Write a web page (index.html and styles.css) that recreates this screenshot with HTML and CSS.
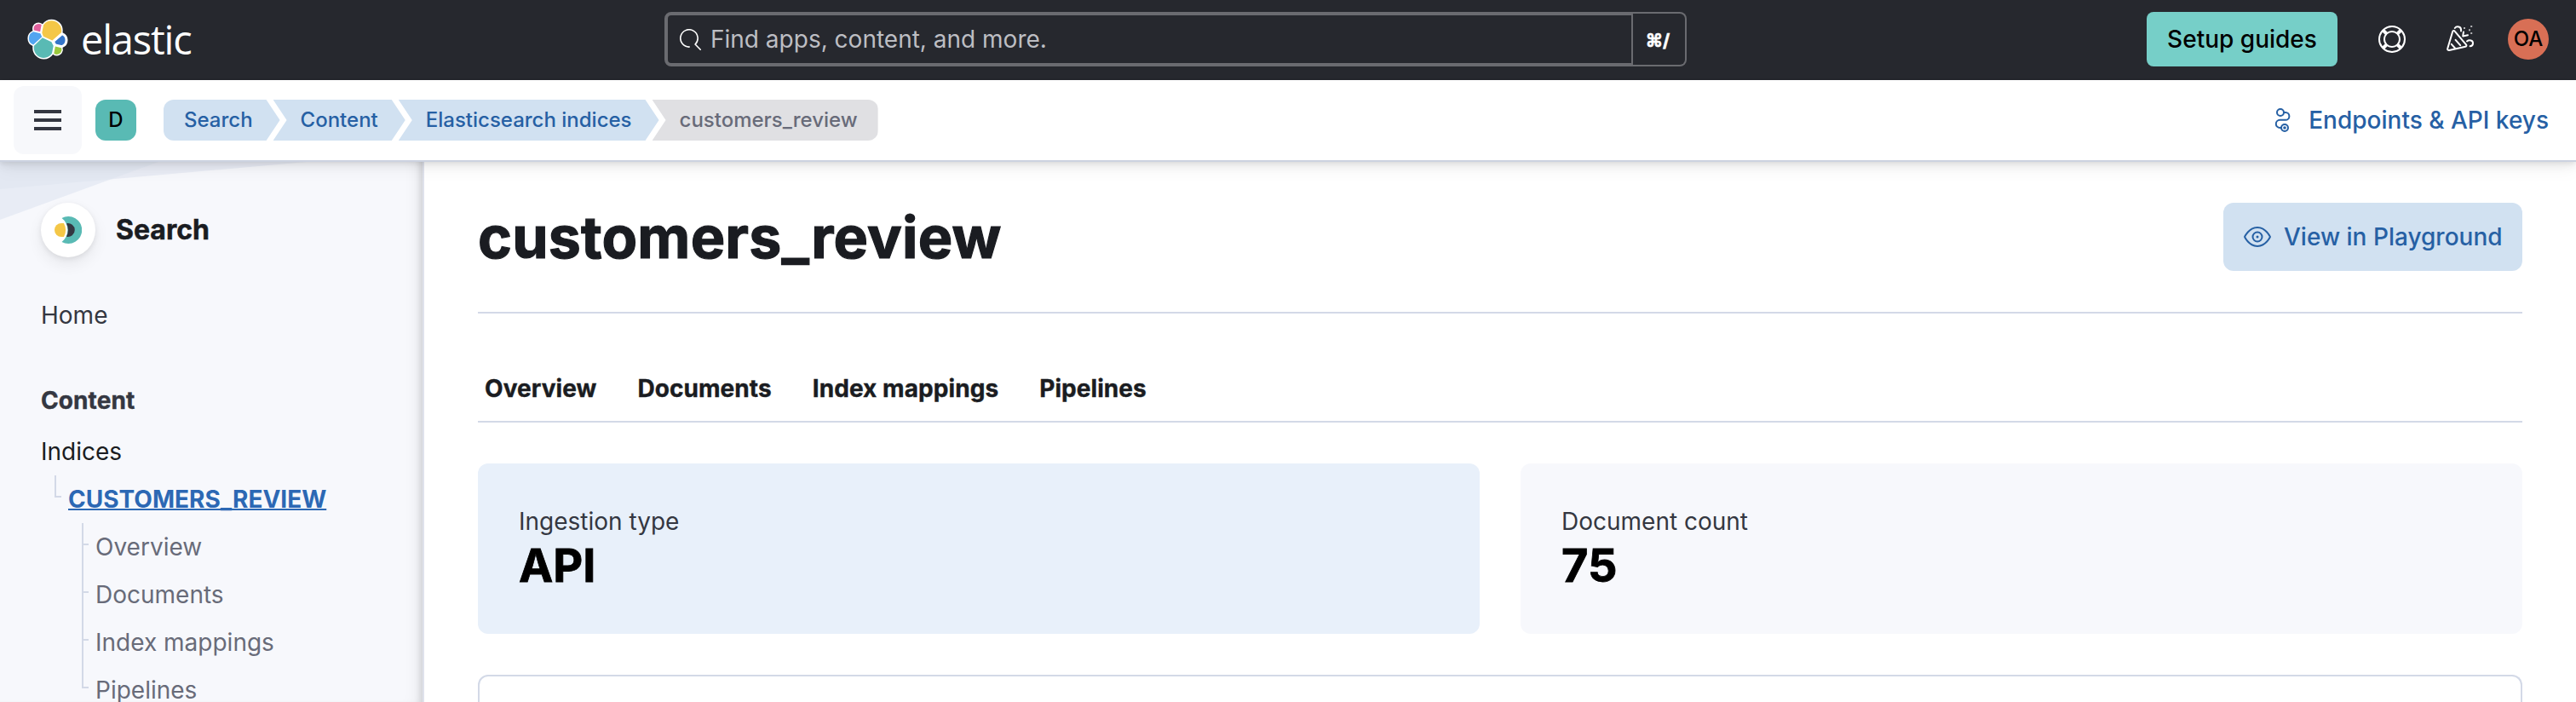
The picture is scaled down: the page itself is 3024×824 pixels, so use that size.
FILE: index.html
```html
<!DOCTYPE html>
<html lang="en">
<head>
<meta charset="utf-8">
<title>customers_review - Elastic</title>
<link rel="stylesheet" href="styles.css">
</head>
<body>
<header class="topbar">
  <div class="brand">
    <svg class="brand-mark" viewBox="0 0 32 32">
      <g stroke="#fff" stroke-width="2" stroke-linejoin="round">
        <path fill="#f4c747" d="M12.58 13.787l7.002 3.211 7.066-6.213a7.849 7.849 0 00.152-1.557c0-4.287-3.464-7.77-7.723-7.77a7.705 7.705 0 00-6.37 3.388l-1.176 6.12z"/>
        <path fill="#59bab4" d="M5.32 21.224A7.92 7.92 0 005.17 22.8c0 4.298 3.475 7.796 7.746 7.796a7.73 7.73 0 006.398-3.402l1.166-6.101-1.556-2.985-7.03-3.214z"/>
        <path fill="#e0609d" d="M5.28 9.077l4.8 1.137L11.128 4.73a3.785 3.785 0 00-2.314-.79A3.806 3.806 0 005.02 7.752c0 .452.09.898.26 1.325z"/>
        <path fill="#51a5f0" d="M4.86 10.22a5.4 5.4 0 00-3.57 5.083 5.39 5.39 0 003.46 5.031l6.73-6.118-1.234-2.648z"/>
        <path fill="#9bc83d" d="M20.87 27.19a3.75 3.75 0 002.305.799 3.802 3.802 0 003.535-5.126l-4.796-1.126z"/>
        <path fill="#3475c9" d="M21.846 20.563l5.28 1.24a5.41 5.41 0 003.57-5.084 5.39 5.39 0 00-3.454-5.021l-6.906 6.07z"/>
      </g>
      <path fill="#f4c747" d="M12.58 13.787l7.002 3.211 7.066-6.213a7.849 7.849 0 00.152-1.557c0-4.287-3.464-7.77-7.723-7.77a7.705 7.705 0 00-6.37 3.388l-1.176 6.12z"/>
      <path fill="#59bab4" d="M5.32 21.224A7.92 7.92 0 005.17 22.8c0 4.298 3.475 7.796 7.746 7.796a7.73 7.73 0 006.398-3.402l1.166-6.101-1.556-2.985-7.03-3.214z"/>
      <path fill="#e0609d" d="M5.28 9.077l4.8 1.137L11.128 4.73a3.785 3.785 0 00-2.314-.79A3.806 3.806 0 005.02 7.752c0 .452.09.898.26 1.325z"/>
      <path fill="#51a5f0" d="M4.86 10.22a5.4 5.4 0 00-3.57 5.083 5.39 5.39 0 003.46 5.031l6.73-6.118-1.234-2.648z"/>
      <path fill="#9bc83d" d="M20.87 27.19a3.75 3.75 0 002.305.799 3.802 3.802 0 003.535-5.126l-4.796-1.126z"/>
    </svg>
    <span class="brand-name">elastic</span>
  </div>
  <div class="search">
    <div class="search-input">
      <svg class="search-icon" viewBox="0 0 16 16" fill="none" stroke="#fff" stroke-linecap="round"><path d="M7.2 13.5A6.5 6.5 0 1 1 11.6 11.6L15.5 15.5"/></svg>
      <span class="search-placeholder">Find apps, content, and more.</span>
    </div>
    <div class="search-key">⌘/</div>
  </div>
  <div class="top-actions">
    <button class="setup">Setup guides</button>
    <svg class="top-icon" viewBox="0 0 16 16" fill="#fff"><path d="M13.6 12.186l-1.357-1.358c-.025-.025-.058-.034-.084-.056.53-.794.84-1.746.84-2.773a4.977 4.977 0 00-.84-2.772c.026-.02.059-.03.084-.056L13.6 3.813a6.96 6.96 0 010 8.373zM8 15a6.956 6.956 0 01-4.186-1.4l1.358-1.358c.025-.025.035-.057.055-.084C6.02 12.688 6.974 13 8 13a4.978 4.978 0 002.773-.84c.02.026.03.058.056.083l1.357 1.358A6.956 6.956 0 018 15zm-5.601-2.813a6.963 6.963 0 010-8.373l1.359 1.358c.024.025.057.035.084.055A4.97 4.97 0 003 8c0 1.027.31 1.98.842 2.773-.027.02-.06.03-.084.055l-1.36 1.358zm5.6-.187A4 4 0 118 4a4 4 0 010 8zM8 1c1.573 0 3.019.525 4.187 1.4l-1.357 1.358c-.025.025-.035.057-.056.084A4.979 4.979 0 008 3a4.979 4.979 0 00-2.773.842c-.02-.027-.03-.059-.055-.084L3.814 2.4A6.957 6.957 0 018 1zm0-1a8.001 8.001 0 10.003 16.002A8.001 8.001 0 008 0z"/></svg>
    <svg class="top-icon" viewBox="0 0 16 16" fill="none" stroke="#fff" stroke-linecap="round" stroke-linejoin="round">
      <path d="M3.6 3.5C3.8 2.9 4.5 2.9 4.8 3.3L11.5 11.2C11.9 11.7 11.7 12.3 11.1 12.4L1.6 14.5C.9 14.6.4 14.1.6 13.5Z"/>
      <path d="M2.9 10.9L5.2 13.5M5.3 8.4L8.1 11.6"/>
      <path d="M4.9 1.5C5.8.2 8.9.2 8.5 3.2"/>
      <path d="M10 3.7L9.6 6.2L12.5 5.6"/>
      <path d="M12 9.2C13.3 8.1 15.6 8.6 15.5 10.4C15.5 11.5 14.7 12.1 13.8 12.1"/>
      <path stroke="none" fill="#fff" fill-opacity=".65" d="M10 1h1v1H10zM14.1 0h1V1h-1zM13 2.1h1V3.1H13zM14.1 4h1V5h-1z"/>
    </svg>
    <span class="avatar">OA</span>
  </div>
</header>

<div class="navbar">
  <button class="menu"><span class="menu-line"></span><span class="menu-line"></span><span class="menu-line"></span></button>
  <span class="space">D</span>
  <nav class="crumbs">
    <a class="crumb crumb-first">Search</a>
    <a class="crumb">Content</a>
    <a class="crumb">Elasticsearch indices</a>
    <span class="crumb crumb-last">customers_review</span>
  </nav>
  <a class="endpoints">
    <svg class="endpoints-icon" viewBox="0 0 32 32" fill="none" stroke="#2660a4" stroke-width="2">
      <circle cx="12" cy="7" r="4"/><circle cx="17" cy="25" r="4"/><circle cx="17" cy="25" r="1.8" fill="#2660a4" stroke="none"/>
      <path d="M16 7H18A4.200 4.200 0 0 1 18 15.800H11.400A4.300 4.300 0 0 0 11.400 25H13"/>
    </svg>
    <span class="endpoints-text">Endpoints &amp; API keys</span>
  </a>
</div>

<div class="body">
  <aside class="sidebar">
    <svg class="sidebar-art" width="400" height="70" viewBox="0 0 400 70"><path fill="#e9ecf5" d="M0 0H360L0 32Z"/><path fill="#dfe5f1" fill-opacity=".62" d="M0 0H186L0 68Z"/></svg>
    <div class="solution">
      <span class="solution-badge">
        <svg class="solution-icon" viewBox="0 0 32 32">
          <path fill="#f4c747" d="M8 8A8 8 0 0 0 8 24H11A17.500 17.500 0 0 0 11 8Z"/>
          <path fill="#59bab4" d="M8.500 2A16 16 0 1 1 8.500 30A17.500 17.500 0 0 0 8.500 2Z"/>
          <path fill="#343741" d="M14 8.200A8 8 0 1 1 14 23.800A17.500 17.500 0 0 0 14 8.200Z"/>
        </svg>
      </span>
      <span class="solution-name">Search</span>
    </div>
    <nav class="nav">
      <a class="nav-item nav-home">Home</a>
      <div class="nav-item nav-heading">Content</div>
      <a class="nav-item nav-active">Indices</a>
      <div class="tree">
        <a class="nav-item tree-item tree-last"><span class="nav-current">CUSTOMERS_REVIEW</span></a>
        <div class="tree">
          <a class="nav-item tree-item">Overview</a>
          <a class="nav-item tree-item">Documents</a>
          <a class="nav-item tree-item">Index mappings</a>
          <a class="nav-item tree-item tree-last">Pipelines</a>
        </div>
      </div>
    </nav>
  </aside>
  <main class="main">
    <div class="page-header">
      <h1 class="title">customers_review</h1>
      <button class="playground">
        <svg class="playground-icon" viewBox="0 0 16 16" fill="#2660a4"><path d="M15.98 7.873c.013.03.02.064.02.098v.06a.24.24 0 01-.02.097C15.952 8.188 13.291 14 8 14S.047 8.188.02 8.128A.24.24 0 010 8.03v-.059c0-.034.007-.068.02-.098C.048 7.813 2.709 2 8 2s7.953 5.813 7.98 5.873zm-1.37-.424a12.097 12.097 0 00-1.385-1.862C11.739 3.956 9.999 3 8 3c-2 0-3.740.956-5.225 2.587a12.098 12.098 0 00-1.701 2.414 12.095 12.095 0 001.700 2.413C4.260 12.043 6.002 13 8 13s3.740-.956 5.225-2.587A12.097 12.097 0 0014.926 8c-.08-.15-.189-.343-.315-.551zM8 4.750A3.253 3.253 0 0111.250 8 3.254 3.254 0 018 11.250 3.253 3.253 0 014.750 8 3.252 3.252 0 018 4.750zm0 1C6.760 5.750 5.750 6.760 5.750 8S6.760 10.250 8 10.250 10.250 9.240 10.250 8 9.240 5.750 8 5.750zm0 1.500a.75.75 0 100 1.500.75.75 0 000-1.500z"/></svg>
        <span class="playground-text">View in Playground</span>
      </button>
    </div>
    <div class="tabs">
      <a class="tab">Overview</a><a class="tab">Documents</a><a class="tab">Index mappings</a><a class="tab">Pipelines</a>
    </div>
    <div class="stats">
      <div class="stat stat-primary"><span class="stat-label">Ingestion type</span><strong class="stat-value">API</strong></div>
      <div class="stat"><span class="stat-label">Document count</span><strong class="stat-value">75</strong></div>
    </div>
    <section class="panel"></section>
  </main>
</div>
</body>
</html>
```

FILE: styles.css
```css
* { box-sizing: border-box; }
body {
  margin: 0;
  height: 824px;
  overflow: hidden;
  display: flex;
  flex-direction: column;
  font-family: Inter, "Liberation Sans", sans-serif;
  font-size: 28px;
  color: #343741;
  background: #fff;
}
button { border: 0; margin: 0; font: inherit; }
svg { display: block; flex: none; }

.topbar {
  flex: none;
  height: 94px;
  padding: 0 32px 2px;
  background: #26282e;
  display: grid;
  grid-template-columns: 748px 1200px 1fr;
  align-items: center;
}
.brand { display: flex; align-items: center; gap: 15px; }
.brand-mark { width: 48px; height: 48px; }
.brand-name {
  font-family: "Open Sans", "Noto Sans", sans-serif;
  font-size: 47px;
  font-weight: 380;
  line-height: 64px;
  letter-spacing: -1.2px;
  color: #fff;
}
.search { display: flex; height: 64px; }
.search-input {
  flex: 1;
  display: flex;
  align-items: center;
  padding-left: 14px;
  gap: 11px;
  border: 4px solid #6a6b70;
  border-right-width: 2px;
  border-radius: 8px 0 0 8px;
}
.search-icon { width: 25px; height: 25px; }
.search-placeholder { color: #bdbec3; }
.search-key {
  width: 63px;
  border: 2px solid #6a6b70;
  border-left: 0;
  border-radius: 0 8px 8px 0;
  display: flex;
  align-items: center;
  justify-content: center;
  padding: 3px 3px 0 0;
  font-size: 21px;
  font-weight: 700;
  -webkit-text-stroke: .6px #fff;
  color: #fff;
}
.top-actions { display: flex; align-items: center; justify-content: flex-end; }
.setup {
  width: 224px;
  height: 64px;
  padding: 0;
  margin-right: 48px;
  border-radius: 8px;
  background: #76cfc8;
  color: #000;
  font-weight: 500;
}
.top-icon { width: 32px; height: 32px; margin-right: 48px; }
.top-icon + .top-icon { margin-right: 40px; }
.avatar {
  width: 48px;
  height: 48px;
  border-radius: 50%;
  background: #d86f55;
  color: #000;
  font-size: 24px;
  font-weight: 500;
  line-height: 47px;
  text-align: center;
}

.navbar {
  flex: none;
  position: relative;
  z-index: 2;
  height: 96px;
  padding: 0 32px 0 16px;
  background: #fff;
  border-bottom: 2px solid #ccd2e0;
  box-shadow: 0 2px 5px rgba(0, 0, 0, .07), 0 6px 10px rgba(0, 0, 0, .05), 0 10px 20px rgba(0, 0, 0, .04);
  display: flex;
  align-items: center;
}
.menu {
  width: 80px;
  height: 80px;
  padding: 0;
  border-radius: 12px;
  background: #f7f8fb;
  display: flex;
  flex-direction: column;
  align-items: center;
  justify-content: center;
  gap: 6px;
}
.menu-line { width: 32px; height: 4px; background: #343741; }
.space {
  width: 48px;
  height: 48px;
  margin: 0 32px 0 16px;
  border-radius: 12px;
  background: #59bab4;
  color: #000;
  font-size: 24px;
  font-weight: 500;
  line-height: 48px;
  text-align: center;
}
.crumbs { display: flex; flex: 1; }
.crumb {
  height: 48px;
  line-height: 47px;
  padding: 0 32px;
  margin-left: -8px;
  background: #d1e1f1;
  color: #2660a4;
  font-size: 24px;
  font-weight: 500;
  clip-path: polygon(0 0, calc(100% - 16px) 0, 100% 50%, calc(100% - 16px) 100%, 0 100%, 16px 50%);
}
.crumb-first {
  margin-left: 0;
  padding-left: 24px;
  border-radius: 12px 0 0 12px;
  clip-path: polygon(0 0, calc(100% - 16px) 0, 100% 50%, calc(100% - 16px) 100%, 0 100%);
}
.crumb-last {
  padding-right: 24px;
  background: #e0e0e3;
  color: #686b79;
  border-radius: 0 12px 12px 0;
  clip-path: polygon(0 0, 100% 0, 100% 100%, 0 100%, 16px 50%);
}
.endpoints { display: flex; align-items: center; gap: 13px; color: #2660a4; font-weight: 500; }
.endpoints-icon { width: 32px; height: 32px; }

.body { flex: 1; min-height: 0; display: flex; }
.sidebar {
  position: relative;
  flex: none;
  width: 498px;
  padding: 48px 0 0 48px;
  background: #f7f8fc;
  border-right: 2px solid #dfe2ec;
  box-shadow: inset -8px 0 8px -6px rgba(0, 0, 0, .14), inset -18px 0 18px -12px rgba(0, 0, 0, .06);
}
.sidebar-art { position: absolute; left: 0; top: 0; }
.solution { position: relative; display: flex; align-items: center; gap: 24px; }
.solution-badge {
  width: 64px;
  height: 64px;
  padding: 16px;
  border-radius: 50%;
  background: #fff;
  box-shadow: 0 2px 6px rgba(0, 0, 0, .08), 0 8px 18px rgba(0, 0, 0, .07);
}
.solution-icon { width: 32px; height: 32px; }
.solution-name {
  font-size: 32px;
  font-weight: 700;
  -webkit-text-stroke: .5px currentColor;
  color: #1a1c21;
  padding-bottom: 2px;
}
.nav { display: flex; flex-direction: column; padding-top: 40px; }
.nav-item { display: block; line-height: 56px; height: 56px; }
.nav-home { margin-bottom: 44px; }
.nav-heading {
  font-weight: 700;
  letter-spacing: .1px;
  -webkit-text-stroke: .4px currentColor;
  margin-bottom: 4px;
}
.nav-active { color: #1a1c21; }
.tree { padding-left: 32px; }
.nav-current {
  color: #2c68b4;
  font-weight: 700;
  text-decoration: underline;
  text-decoration-thickness: 2px;
  text-decoration-skip-ink: none;
}
.tree-item { position: relative; color: #686b79; }
.tree-item::before {
  content: "";
  position: absolute;
  left: -16px;
  top: 0;
  width: 2px;
  height: 56px;
  background: #d3d9e7;
}
.tree-item.tree-last::before { height: 26px; }
.tree-item::after {
  content: "";
  position: absolute;
  left: -16px;
  top: 24px;
  width: 8px;
  height: 2px;
  background: #d3d9e7;
}

.main { flex: 1; min-width: 0; padding: 48px 63px 0; display: flex; flex-direction: column; }
.page-header {
  flex: none;
  height: 130px;
  border-bottom: 2px solid #d3d9e7;
  display: flex;
  align-items: flex-start;
  justify-content: space-between;
}
.title {
  margin: 0;
  font-size: 68px;
  line-height: 80px;
  font-weight: 700;
  letter-spacing: .2px;
  -webkit-text-stroke: 1.2px currentColor;
  color: #1a1c21;
}
.playground {
  width: 351px;
  height: 80px;
  padding: 0 24px;
  border-radius: 12px;
  background: #d1e1f1;
  color: #2660a4;
  font-weight: 500;
  display: flex;
  align-items: center;
  gap: 15px;
  white-space: nowrap;
}
.playground-icon { width: 32px; height: 32px; }
.tabs {
  flex: none;
  height: 128px;
  padding: 48px 8px 0;
  border-bottom: 2px solid #d3d9e7;
  display: flex;
  gap: 48px;
  line-height: 80px;
  font-weight: 700;
  letter-spacing: .07px;
  -webkit-text-stroke: .4px currentColor;
  color: #1a1c21;
}
.stats { flex: none; display: grid; grid-template-columns: 1fr 1fr; gap: 48px; padding: 48px 0; }
.stat {
  height: 200px;
  padding: 48px;
  border-radius: 12px;
  background: #f7f8fc;
  display: flex;
  flex-direction: column;
}
.stat-primary { background: #e8f0fa; }
.stat-label { line-height: 40px; }
.stat-value {
  font-size: 54px;
  font-weight: 700;
  line-height: 63px;
  -webkit-text-stroke: .8px currentColor;
  color: #000;
}
.panel { flex: 1; border: 2px solid #d3d9e7; border-bottom: 0; border-radius: 12px 12px 0 0; }
```
